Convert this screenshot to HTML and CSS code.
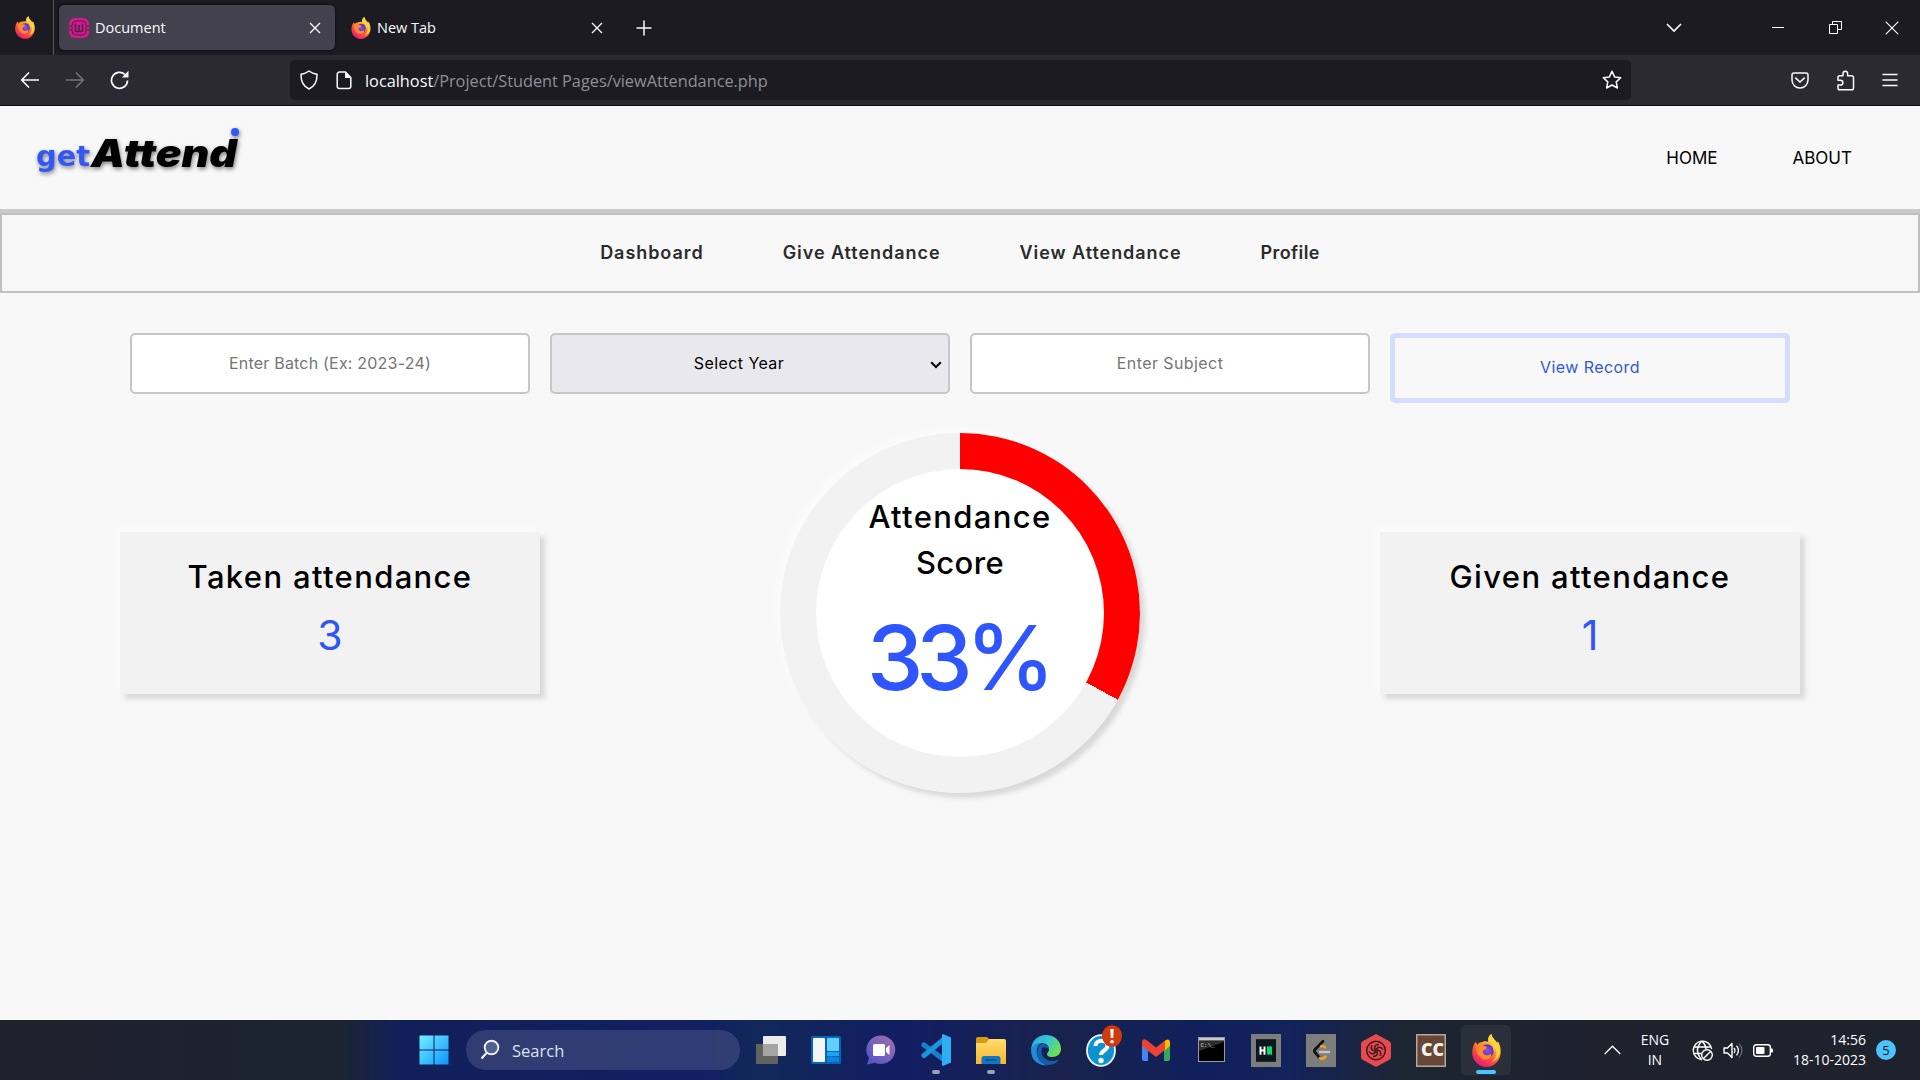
FILE: index.html
```html
<!DOCTYPE html>
<html lang="en">
<head>
<meta charset="utf-8">
<title>Document</title>
<link rel="stylesheet" href="styles.css">
</head>
<body>
<svg class="defs" width="0" height="0" aria-hidden="true">
  <defs>
    <linearGradient id="ffOuter" x1=".8" y1="0" x2=".25" y2="1"><stop offset="0" stop-color="#fff44f"/><stop offset=".35" stop-color="#ffa930"/><stop offset=".65" stop-color="#ff4f3f"/><stop offset="1" stop-color="#e8157f"/></linearGradient>
    <radialGradient id="ffGlobe"><stop offset="0" stop-color="#8a4df0"/><stop offset="1" stop-color="#5a34b8"/></radialGradient>
    <linearGradient id="win" x1="0" y1="0" x2="1" y2="1"><stop offset="0" stop-color="#75f0ff"/><stop offset="1" stop-color="#0b93ff"/></linearGradient>
    <linearGradient id="edgeTop" x1="0" y1="0" x2="1" y2=".6"><stop offset="0" stop-color="#2ba6e0"/><stop offset=".5" stop-color="#36c4d8"/><stop offset="1" stop-color="#6ee04e"/></linearGradient>
    <linearGradient id="chat" x1="1" y1="0" x2="0" y2="1"><stop offset="0" stop-color="#a46fae"/><stop offset="1" stop-color="#4b53c8"/></linearGradient>
    <linearGradient id="folder" x1="0" y1="0" x2="0" y2="1"><stop offset="0" stop-color="#ffdc70"/><stop offset="1" stop-color="#f8b62c"/></linearGradient>
    <symbol id="firefox" viewBox="0 0 30 34">
      <path fill="url(#ffOuter)" d="M4 8c.6 1 1 2 1.400 3C7 9 8.500 8.500 10 8.500 13 7 15 7.500 17 8c-.5-3 .5-6 3-8 .5 4 4 5.500 6 9l.8-1.500C29 11 30 15 29.700 19.500 29 28 22.500 34 15 34S.8 28 .3 20C0 15 1.500 11 4 8z"/>
      <circle cx="15.500" cy="17.500" r="7" fill="url(#ffGlobe)"/>
      <path fill="#ff8a2a" d="M5 11c3 2 7 0 10 2 1 1 0 3-3 3.500-1 1-1 2-.5 3 1 3 6 3 8 .5 1.500 4-3 7.500-7.500 6C6 24 3 17 5 11z"/>
      <path fill="#ffd43a" d="M17 8c4 1 6 5 5.500 10 1-1 1.500-2.500 1.500-4 3 5 1 12-4 15 8-2 10-9 8-15-2-5-6-7-8-14-3 2-4 5-3 8z"/>
    </symbol>
    <symbol id="close" viewBox="0 0 12 12"><path d="M1 1l10 10M11 1L1 11" stroke="#fbfbfe" stroke-width="1.300" fill="none"/></symbol>
  </defs>
</svg>

<div class="tabbar">
  <div class="tab-pin"><svg width="20" height="25"><use href="#firefox"/></svg></div>
  <div class="tab active">
    <svg class="fav" width="20" height="20" viewBox="0 0 20 20"><rect width="20" height="20" rx="6" fill="#d6178d"/><rect x="3" y="3" width="14" height="14" rx="4" fill="none" stroke="#4a2544"/><path d="M6.500 5.500v8h7v-8M10 7v6" stroke="#4a2544" stroke-width="1.600" fill="none"/><path d="M0 8h3M0 12h3M17 8h3M17 12h3" stroke="#4a2544"/></svg>
    <span class="tab-title">Document</span>
    <svg class="x" width="12" height="12"><use href="#close"/></svg>
  </div>
  <div class="tab">
    <svg class="fav" width="20" height="22"><use href="#firefox"/></svg>
    <span class="tab-title">New Tab</span>
    <svg class="x" width="12" height="12"><use href="#close"/></svg>
  </div>
  <svg class="plus" width="16" height="16" viewBox="0 0 16 16"><path d="M8 .5v15M.5 8h15" stroke="#fbfbfe" stroke-width="1.500"/></svg>
  <div class="window-controls">
    <svg width="16" height="10" viewBox="0 0 16 10"><path d="M1 1l7 7 7-7" stroke="#fbfbfe" stroke-width="1.600" fill="none"/></svg>
    <svg width="12" height="12" viewBox="0 0 12 12"><path d="M0 5.500h12" stroke="#fff"/></svg>
    <svg width="13" height="13" viewBox="0 0 13 13"><path d="M.5 3.500h8v9h-8zM3.500 3.500v-3h9v8h-4" stroke="#fff" fill="none"/></svg>
    <svg width="14" height="14" viewBox="0 0 14 14"><path d="M.7.7l12.600 12.600M13.300.7L.7 13.300" stroke="#fff" stroke-width="1.100"/></svg>
  </div>
</div>

<div class="toolbar">
  <div class="nav-buttons">
    <svg width="20" height="20" viewBox="0 0 20 20"><path d="M19 10H2M9 2.500L1.700 10 9 17.500" stroke="#fbfbfe" stroke-width="1.600" fill="none"/></svg>
    <svg width="20" height="20" viewBox="0 0 20 20"><path d="M1 10h17M11 2.500l7.300 7.500-7.300 7.500" stroke="#77767f" stroke-width="1.500" fill="none"/></svg>
    <svg width="20" height="20" viewBox="0 0 20 20"><path d="M17.500 10.500A8 8 0 1 1 15 4.500" stroke="#fbfbfe" stroke-width="1.700" fill="none"/><path d="M18.500.8v6.700h-6.700z" fill="#fbfbfe"/></svg>
  </div>
  <div class="urlbar">
    <svg width="18" height="20" viewBox="0 0 18 20"><path d="M9 1c2.500 2 5 2.800 8 3.300C17.200 11.500 14.500 16.500 9 19 3.500 16.500.8 11.500 1 4.300 4 3.800 6.500 3 9 1z" stroke="#fbfbfe" stroke-width="1.500" fill="none" stroke-linejoin="round"/></svg>
    <svg class="doc" width="16" height="19" viewBox="0 0 16 19"><path d="M9.500 1H3.500a2.300 2.300 0 0 0-2.300 2.300v12A2.300 2.300 0 0 0 3.500 17.600h9a2.300 2.300 0 0 0 2.300-2.300V6.500z" stroke="#fbfbfe" stroke-width="1.500" fill="none"/><path d="M9 1v6h6z" fill="#fbfbfe"/></svg>
    <span class="url"><b>localhost</b>/Project/Student Pages/viewAttendance.php</span>
    <svg class="star" width="20" height="20" viewBox="0 0 20 20"><path d="M10 1.300l2.600 5.600 6.100.8-4.500 4.200 1.200 6.100L10 15l-5.400 3 1.200-6.100L1.300 7.700l6.100-.8z" stroke="#fbfbfe" stroke-width="1.500" fill="none" stroke-linejoin="round"/></svg>
  </div>
  <div class="tool-icons">
    <svg width="18" height="17" viewBox="0 0 18 17"><path d="M3 1h12a2 2 0 0 1 2 2v5a8 8 0 0 1-16 0V3a2 2 0 0 1 2-2z" stroke="#fbfbfe" stroke-width="1.500" fill="none"/><path d="M4.800 6.200L9 10l4.200-3.800" stroke="#fbfbfe" stroke-width="1.600" fill="none" stroke-linecap="round"/></svg>
    <svg width="19" height="21" viewBox="0 0 19 21"><path d="M2 9V7.500A1.800 1.800 0 0 1 3.800 5.700H7V3.500a2.300 2.300 0 0 1 4.600 0v2.200h4A1.800 1.800 0 0 1 17.500 7.500v10.500a1.800 1.800 0 0 1-1.800 1.800H3.800A1.800 1.800 0 0 1 2 18v-3h2.500a2.300 2.300 0 0 0 0-4.700H2z" stroke="#fbfbfe" stroke-width="1.500" fill="none" stroke-linejoin="round"/></svg>
    <svg width="16" height="14" viewBox="0 0 16 14"><path d="M.5 1.500h15M.5 7h15M.5 12.500h15" stroke="#fbfbfe" stroke-width="1.400"/></svg>
  </div>
</div>

<div class="page">
  <header class="site-header">
    <svg class="logo" width="210" height="56" viewBox="0 0 210 56">
      <text class="logo-get" x="1" y="41" textLength="54" lengthAdjust="spacingAndGlyphs">get</text>
      <text class="logo-attend" x="56" y="42" textLength="146" lengthAdjust="spacingAndGlyphs">Attend</text>
      <circle cx="200" cy="7" r="4" fill="#3157f6"/>
    </svg>
    <nav class="top-links"><a>HOME</a><a>ABOUT</a></nav>
  </header>

  <nav class="main-nav">
    <a>Dashboard</a><a>Give Attendance</a><a>View Attendance</a><a class="short">Profile</a>
  </nav>

  <section class="filters">
    <div class="field batch"><span>Enter Batch (Ex: 2023-24)</span></div>
    <div class="field select"><span>Select Year</span>
      <svg class="caret" width="12" height="8" viewBox="0 0 12 8"><path d="M1.200 1.200L6 6l4.800-4.800" stroke="#000" stroke-width="2" fill="none"/></svg></div>
    <div class="field"><span>Enter Subject</span></div>
    <div class="view-btn"><span>View Record</span></div>
  </section>

  <section class="stats">
    <div class="card"><h2>Taken attendance</h2><p>3</p></div>
    <div class="ring"><div class="ring-inner">
      <h2>Attendance<br><span class="score">Score</span></h2>
      <p>33%</p>
    </div></div>
    <div class="card"><h2>Given attendance</h2><p>1</p></div>
  </section>
</div>

<div class="taskbar">
  <div class="start"><svg width="30" height="30" viewBox="0 0 30 30"><path fill="url(#win)" d="M1 .5h13.500v14H.5V1zM15.500.5h14v14h-14zM.5 15.500h14v14H.5zM15.500 15.500h14v14h-14z"/></svg></div>
  <div class="search">
    <svg width="20" height="22" viewBox="0 0 20 22"><circle cx="11.500" cy="8.500" r="6.800" stroke="#f0f2fa" stroke-width="1.900" fill="#50608d"/><path d="M7 13.500L1.500 19.500" stroke="#f0f2fa" stroke-width="2.200"/></svg>
    <span>Search</span>
  </div>
  <div class="apps">
    <div class="app"><svg width="30" height="30" viewBox="0 0 30 30"><rect y="9" width="22" height="20" rx="1" fill="#63625f"/><rect x="7" y="1" width="23" height="20" rx="1" fill="#ececec"/><path d="M7 9h15v12H7z" fill="#a5a5a3"/></svg></div>
    <div class="app"><svg width="30" height="30" viewBox="0 0 30 30"><rect y="1" width="30" height="28" rx="1.500" fill="#0a63b4"/><rect x="2" y="3" width="12" height="24" rx="1" fill="#f3f5f8"/><rect x="16" y="3" width="12" height="13" rx="1" fill="#5fd0ff"/><rect x="16" y="17" width="12" height="4" fill="#1aa5f2"/><rect x="16" y="22" width="12" height="5" fill="#0a84dc"/></svg></div>
    <div class="app"><svg width="30" height="30" viewBox="0 0 30 30"><path fill="url(#chat)" d="M15 .5A14.300 14.300 0 1 1 9 27.800L1 29.500 3 23A14.300 14.300 0 0 1 15 .5z"/><rect x="7" y="9" width="12" height="12" rx="1.500" fill="#fff"/><path d="M20 13l3.500-3v10L20 17z" fill="#fff"/></svg></div>
    <div class="app run"><svg width="30" height="32" viewBox="0 0 30 32"><path d="M3 11L22 25" stroke="#1583cc" stroke-width="5" stroke-linecap="round"/><path d="M3 21.500L22 6" stroke="#1b95df" stroke-width="5" stroke-linecap="round"/><path d="M22 0l8 3.500v25L22 32l-1-1V1z" fill="#30aef4"/></svg></div>
    <div class="app run"><svg width="30" height="30" viewBox="0 0 30 30"><path d="M0 4a2 2 0 0 1 2-2h9l3 3-2 4H0z" fill="#d89a12"/><path d="M0 8h10l3-4h15a2 2 0 0 1 2 2v23H0z" fill="url(#folder)"/><path d="M5.500 29v-5.500a2.500 2.500 0 0 1 2.500-2.500h14a2.500 2.500 0 0 1 2.500 2.500V29z" fill="#1177c0"/><path d="M9.500 25h11" stroke="#0a4c86" stroke-width="1.500"/></svg></div>
    <div class="app"><svg width="30" height="32" viewBox="0 0 30 32"><path d="M15 1c8.500 0 15 6 15 14 0 5-4 8-9 8-4 0-5-1.500-5-3 0-1.500 2-2 2-4.500C18 11 14.500 9 10.500 9 5 9 1 13 .2 16.500-.2 8 6 1 15 1z" fill="url(#edgeTop)"/><path d="M.2 16C1 11 5.500 8.500 10.500 9c-4 2-5.500 6-4.500 11 1.200 6 6 10.500 11 11C8 32.500-.5 26 .2 16z" fill="#1b8fd8"/><path d="M11 14c-2.500 7 3 13 10 13 3 0 5-.6 7.500-2C26 29 22 31.200 17 31 9 30 5 24 6 18c.5-4 2-7 5-8.500 4 0 7 2 7 6-2-2-5-3-7-1.500z" fill="#155cac"/></svg></div>
    <div class="app"><svg width="30" height="33" viewBox="0 0 30 33"><ellipse cx="15" cy="16.500" rx="14" ry="15.300" fill="#0d92d2" stroke="#eef7fc" stroke-width="1.800"/><path d="M9.500 12c0-7 12-7 12-.3 0 5-6.500 4.600-6.500 9.300" stroke="#fff" stroke-width="4" fill="none"/><circle cx="15" cy="26.500" r="2.700" fill="#fff"/></svg>
      <span class="alert"><svg width="20" height="22" viewBox="0 0 20 22"><ellipse cx="10" cy="11" rx="10" ry="10.800" fill="#d13a0c"/><path d="M8.300 4h3.400l-.4 9H8.700z" fill="#fff"/><circle cx="10" cy="16.700" r="1.800" fill="#fff"/></svg></span></div>
    <div class="app"><svg width="28" height="22" viewBox="0 0 28 22"><path d="M0 3.500L6 8v14H2a2 2 0 0 1-2-2z" fill="#4285f4"/><path d="M28 3.500L22 8v14h4a2 2 0 0 0 2-2z" fill="#34a853"/><path d="M22 2.500L24 1c2-1.500 4 0 4 2.500V7l-6 5z" fill="#fbbc04"/><path d="M0 3.500C0 0 2.500-.5 4.500 1L14 8.500 23 1.500V11l-9 7L5.500 11.500 0 7z" fill="#ea4335"/></svg></div>
    <div class="app"><svg class="console" width="27" height="25" viewBox="0 0 27 25"><rect x=".5" y=".5" width="26" height="24" fill="#000" stroke="#9a9a9a"/><path d="M1 1h25v2.500H1z" fill="#c9ccd0"/><path d="M1 14L26 5V4H1z" fill="#2c2c2c"/><text x="2.500" y="9.500" class="cmd">C:\_</text></svg></div>
    <div class="app"><svg width="30" height="33" viewBox="0 0 30 32" preserveAspectRatio="none"><path d="M0 0h30v32H0z" fill="#7d7d7d"/><path d="M5 5h20v22H5z" fill="#0b1620"/><path d="M9.500 12v8M13.500 12v8M9.500 16h4" stroke="#fff" stroke-width="2"/><path d="M16 12h5v8h-5z" fill="#05df6a"/></svg></div>
    <div class="app"><svg width="30" height="33" viewBox="0 0 30 32" preserveAspectRatio="none"><path d="M0 0h30v32H0z" fill="#7d7d7d"/><path d="M17 7L9 15q-1.500 1.500 0 3l1 1" stroke="#111" stroke-width="2.700" fill="none" stroke-linecap="round"/><path d="M15 12q2-1 4 1" stroke="#f5a01c" stroke-width="2.300" fill="none" stroke-linecap="round"/><path d="M10 19l3.500 4" stroke="#111" stroke-width="2.700" stroke-linecap="round"/><path d="M14 23.500q3 1.500 5.500-1.500" stroke="#f5a01c" stroke-width="2.700" fill="none" stroke-linecap="round"/><path d="M14 17.500h9" stroke="#c5c5c5" stroke-width="2.400" stroke-linecap="round"/></svg></div>
    <div class="app"><svg width="30" height="33" viewBox="0 0 30 33"><path d="M15 0l13 7q2 1 2 3v13q0 2-2 3l-13 7-13-7q-2-1-2-3V10q0-2 2-3z" fill="#e64a50"/><circle cx="15" cy="16.500" r="9.300" fill="none" stroke="#40181e" stroke-width="1.500"/><path d="M15 16.500c-3-3-1-6 3-6M15 16.500c1-4 5-4.500 7-1M15 16.500c4-1 6 2 4 5.500M15 16.500c3 3 1 6-3 6M15 16.500c-1 4-5 4.500-7 1M15 16.500c-4 1-6-2-4-5.500" stroke="#40181e" stroke-width="1.500" fill="none"/></svg></div>
    <div class="app"><svg width="30" height="33" viewBox="0 0 30 33"><path d="M.7.700h28.600v31.600H.7z" fill="#664636" stroke="#b9a79b" stroke-width="1.500"/><text x="5" y="22" textLength="23" lengthAdjust="spacingAndGlyphs" class="cc">CC</text></svg></div>
    <div class="app current"><svg width="29" height="33"><use href="#firefox"/></svg></div>
  </div>
  <div class="tray">
    <svg width="17" height="10" viewBox="0 0 17 10"><path d="M.7 9L8.500 1.200 16.300 9" stroke="#fff" stroke-width="1.300" fill="none"/></svg>
    <div class="lang"><span>ENG</span><span>IN</span></div>
    <div class="sys">
      <svg width="21" height="21" viewBox="0 0 21 21"><g stroke="#fff" stroke-width="1.400" fill="none"><path d="M10 19.700A9.300 9.300 0 1 1 19.700 9M9.500 19.500C4 13 4 7 10 1c2.500 2.500 3.800 5 4 8M1.500 7h17M1.500 13.500h8"/><circle cx="15" cy="15" r="5.300" fill="#1c222e"/><path d="M11.500 18.500l7-7"/></g></svg>
      <svg width="20" height="17" viewBox="0 0 20 17"><path d="M1 6h3.500L9 1.500v14L4.500 11H1z" stroke="#fff" stroke-width="1.400" fill="none" stroke-linejoin="round"/><path d="M11 6q2 2.500 0 5M13.500 3.700q4 4.800 0 9.600" stroke="#fff" stroke-width="1.300" fill="none"/><path d="M16.200 1.500q5.500 7 0 14" stroke="#6d717a" stroke-width="1.200" fill="none"/></svg>
      <svg width="21" height="13" viewBox="0 0 21 13"><rect x=".7" y=".7" width="16.600" height="11.600" rx="2.500" stroke="#fff" stroke-width="1.400" fill="none"/><rect x="3" y="3" width="8.500" height="7" rx="1" fill="#fff"/><path d="M18 4.500h1.500q1 2 0 4H18z" fill="#fff"/></svg>
    </div>
    <div class="clock"><span>14:56</span><span>18-10-2023</span></div>
    <span class="count">5</span>
  </div>
</div>
</body>
</html>
```
FILE: styles.css
```css
* { box-sizing: border-box; }
body { margin: 0; width: 1920px; height: 1080px; overflow: hidden; display: flex; flex-direction: column; background: #f8f8f8; font-family: Inter, sans-serif; color: #000; white-space: nowrap; }
svg { display: block; flex: none; }
.defs { position: absolute; }
h2, p { margin: 0; }

/* browser tabs */
.tabbar { height: 55px; flex: none; display: flex; align-items: center; background: #1c1b22; color: #fbfbfe; font: 14.500px "Open Sans", sans-serif; }
.tab-pin { width: 54px; height: 55px; display: flex; align-items: center; padding-left: 15px; border-right: 1px solid #55545c; }
.tab { width: 276px; height: 45px; margin-left: 5px; padding: 0 14px 0 10px; display: flex; align-items: center; border-radius: 5px; }
.tab + .tab { margin-left: 6px; }
.tab.active { background: #42414d; box-shadow: 0 0 3px #000; }
.tab-title { flex: 1; margin-left: 6px; }
.plus { margin-left: 19px; }
.window-controls { margin-left: auto; display: flex; align-items: center; padding-right: 21px; }
.window-controls svg:nth-child(2) { margin-left: 90px; }
.window-controls svg:nth-child(3) { margin-left: 45px; }
.window-controls svg:nth-child(4) { margin-left: 43px; }

/* address toolbar */
.toolbar { height: 51px; flex: none; display: flex; align-items: center; background: #2b2a33; border-bottom: 1px solid #0c0c0d; }
.nav-buttons { width: 290px; padding-left: 20px; display: flex; gap: 25px; }
.urlbar { width: 1341px; height: 40px; display: flex; align-items: center; padding: 0 9px 0 10px; background: #1c1b22; border-radius: 5px; }
.doc { margin-left: 18px; }
.url { margin-left: 13px; padding-top: 2px; font: 16.300px "Open Sans", sans-serif; color: #8f8f96; }
.url b { font-weight: 400; color: #fbfbfe; }
.star { margin-left: auto; }
.tool-icons { margin-left: auto; padding-right: 22px; display: flex; align-items: center; gap: 27px; }

/* web page */
.page { height: 914px; flex: none; }
.site-header { height: 107px; display: flex; justify-content: space-between; border-bottom: 4px solid #c9c9c9; }
.logo { margin: 19px 0 0 35px; overflow: visible; filter: drop-shadow(1px 2px 2px rgba(0, 0, 0, .5)); }
.logo-get { font: 600 29px "DejaVu Sans", sans-serif; fill: #3157f6; }
.logo-attend { font: italic 900 38px Inter, sans-serif; fill: #000; }
.top-links { display: flex; gap: 75px; padding: 41px 68px 0 0; font-size: 17px; line-height: 22px; }
.main-nav { height: 80px; display: flex; justify-content: center; align-items: center; gap: 79px; padding-bottom: 2px; border: 2px solid #c0c0c0; font-size: 18px; font-weight: 600; letter-spacing: .95px; color: #2b2b2b; }
.main-nav .short { letter-spacing: .4px; }
.filters { display: flex; align-items: flex-start; gap: 20px; padding: 40px 130px 0; }
.field, .view-btn { width: 400px; display: flex; align-items: center; justify-content: center; font-size: 16px; letter-spacing: .42px; border-radius: 5px; }
.field { position: relative; height: 61px; padding-bottom: 1px; border: 2px solid #c6c6c6; background: #fff; color: #757575; }
.batch { letter-spacing: .2px; }
.select { background: #e9e9ed; color: #000; padding-right: 22px; }
.caret { position: absolute; right: 6px; top: 26px; }
.view-btn { height: 70px; padding-bottom: 2px; border: 5px solid #d5ddff; color: #3157e0; }
.stats { display: flex; justify-content: space-between; align-items: center; padding: 30px 120px 0; text-align: center; }
.card { width: 420px; height: 162px; padding-top: 22px; background: #f2f2f2; box-shadow: 5px 5px 5px #d9d9d9, -5px -5px 5px #fbfbfb; }
h2 { font-size: 31px; font-weight: 500; line-height: 46px; letter-spacing: 1.350px; }
.score { letter-spacing: .4px; }
.card p { font-size: 41px; line-height: 60px; color: #2f55f8; margin-top: 5px; }
.ring { width: 360px; height: 360px; padding: 36px; border-radius: 50%; background: conic-gradient(#f00 33%, #f2f2f2 0); box-shadow: 5px 5px 5px #d9d9d9, -5px -5px 5px #fbfbfb; }
.ring-inner { height: 288px; padding-top: 25px; border-radius: 50%; background: #fff; }
.ring p { margin-top: 24px; padding-right: 5px; font-size: 90px; font-weight: 500; line-height: 96px; letter-spacing: -7px; color: #2f55ff; }

/* taskbar */
.taskbar { height: 60px; flex: none; display: flex; align-items: center; background: linear-gradient(90deg, #1e222d 0, #1b2430 340px, #11205a 400px, #121f62 700px, #12285a 760px, #111e62 900px, #19224c 1060px, #10205c 1200px, #12225a 1290px, #1c2532 1400px, #1d222d 1600px, #1d222d 100%); color: #fff; font-family: "Open Sans", sans-serif; }
.start { margin-left: 419px; }
.search { width: 274px; height: 40px; margin-left: 17px; padding-left: 14px; display: flex; align-items: center; border-radius: 20px; background: rgba(105, 115, 155, .35); font-size: 16.500px; color: #dde1ee; }
.search span { margin-left: 12px; }
.apps { display: flex; margin-left: 6px; gap: 5px; }
.app { position: relative; width: 50px; height: 50px; display: flex; align-items: center; justify-content: center; border-radius: 5px; }
.console { margin-bottom: 2px; }
.alert { position: absolute; left: 26px; top: 0; }
.run::after, .current::after { content: ""; position: absolute; bottom: 1px; left: 21px; width: 8px; height: 4px; border-radius: 2px; background: #9b9fb4; }
.current { background: #293039; }
.current::after { left: 15px; width: 20px; background: #4cc2ff; }
.cmd { font: 6px "Liberation Mono", monospace; fill: #ddd; }
.cc { font: 800 17px "Open Sans", sans-serif; fill: #f5f0ea; }
.tray { margin-left: auto; padding-right: 24px; display: flex; align-items: center; font-size: 14px; line-height: 20px; }
.lang { width: 40px; margin-left: 14px; display: flex; flex-direction: column; align-items: center; }
.sys { display: flex; align-items: center; gap: 10px; margin-left: 17px; }
.clock { display: flex; flex-direction: column; align-items: flex-end; margin-left: 19px; margin-top: -1px; }
.count { width: 20px; height: 20px; margin-left: 10px; border-radius: 50%; background: #4cc2ff; color: #111; font-size: 13px; text-align: center; }
```
